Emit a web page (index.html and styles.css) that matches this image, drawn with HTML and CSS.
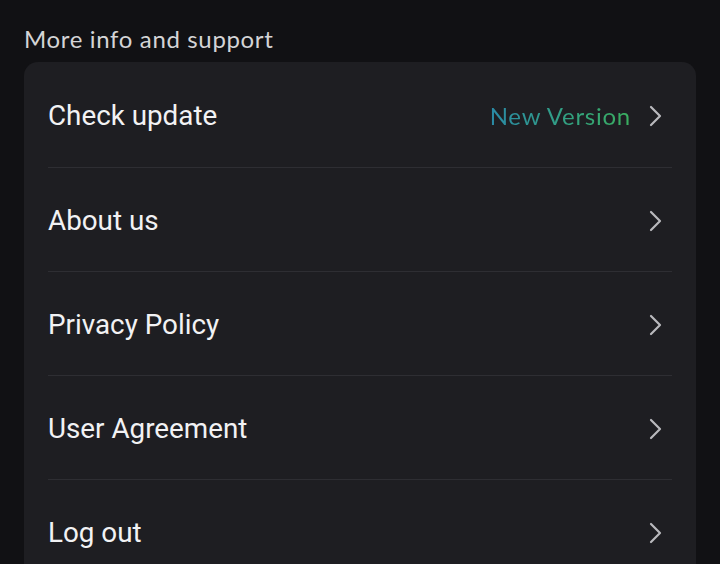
FILE: index.html
```html
<!DOCTYPE html>
<html>
<head>
<meta charset="utf-8">
<link rel="stylesheet" href="styles.css">
</head>
<body>
<div class="page">
  <div class="section-title">More info and support</div>
  <div class="card">
    <div class="row">
      <span class="label">Check update</span>
      <span class="right"><span class="badge">New Version</span><svg class="chev" viewBox="0 0 15 22" width="15" height="22"><path d="M3 2 L12 11 L3 20" fill="none" stroke="#b9b9bd" stroke-width="2.2" stroke-linecap="round" stroke-linejoin="round"/></svg></span>
    </div>
    <div class="row">
      <span class="label">About us</span>
      <span class="right"><svg class="chev" viewBox="0 0 15 22" width="15" height="22"><path d="M3 2 L12 11 L3 20" fill="none" stroke="#b9b9bd" stroke-width="2.2" stroke-linecap="round" stroke-linejoin="round"/></svg></span>
    </div>
    <div class="row">
      <span class="label">Privacy Policy</span>
      <span class="right"><svg class="chev" viewBox="0 0 15 22" width="15" height="22"><path d="M3 2 L12 11 L3 20" fill="none" stroke="#b9b9bd" stroke-width="2.2" stroke-linecap="round" stroke-linejoin="round"/></svg></span>
    </div>
    <div class="row">
      <span class="label">User Agreement</span>
      <span class="right"><svg class="chev" viewBox="0 0 15 22" width="15" height="22"><path d="M3 2 L12 11 L3 20" fill="none" stroke="#b9b9bd" stroke-width="2.2" stroke-linecap="round" stroke-linejoin="round"/></svg></span>
    </div>
    <div class="row">
      <span class="label">Log out</span>
      <span class="right"><svg class="chev" viewBox="0 0 15 22" width="15" height="22"><path d="M3 2 L12 11 L3 20" fill="none" stroke="#b9b9bd" stroke-width="2.2" stroke-linecap="round" stroke-linejoin="round"/></svg></span>
    </div>
  </div>
</div>
</body>
</html>
```
FILE: styles.css
```css
html, body {
  margin: 0;
  padding: 0;
  background: #111114;
  height: 100%;
  overflow: hidden;
}
.page {
  padding: 24px 24px 0 24px;
}
.section-title {
  font-family: Lato, "Noto Sans", sans-serif;
  font-size: 24px;
  letter-spacing: 0.65px;
  color: #d4d4d6;
  height: 38px;
  line-height: 30px;
}
.card {
  background: #1e1e22;
  border-radius: 14px;
  padding: 0 24px;
}
.row {
  box-sizing: border-box;
  display: flex;
  align-items: center;
  justify-content: space-between;
  height: 104px;
  padding-top: 2px;
  border-bottom: 1px solid #2e2e33;
}
.row:first-child {
  height: 106px;
}
.label {
  font-family: Roboto, "Liberation Sans", sans-serif;
  font-size: 27.8px;
  color: #f2f2f4;
}
.right {
  display: flex;
  align-items: center;
  gap: 17px;
  margin-right: 9px;
}
.badge {
  font-family: Lato, "Noto Sans", sans-serif;
  font-size: 24px;
  letter-spacing: 0.75px;
  background: linear-gradient(90deg, #2a8aa6 0%, #33a37e 60%, #3aad5e 100%);
  -webkit-background-clip: text;
  background-clip: text;
  color: transparent;
}
.chev {
  display: block;
}
```
